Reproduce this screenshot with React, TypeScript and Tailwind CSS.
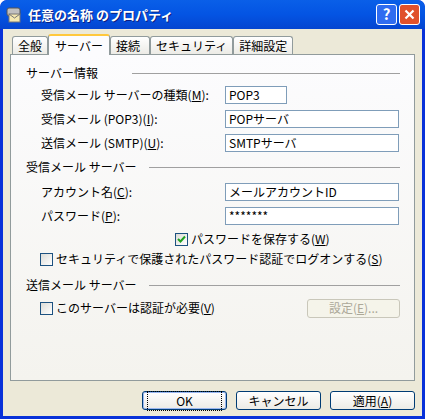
import React from "react";

const F = { fontFamily: '"MS UI Gothic","Noto Sans CJK JP",sans-serif' };

function Sec({ t, w }: { t: string; w: number }) {
  return (
    <div className="flex items-center h-[20px]">
      <span className="pl-[15px] whitespace-nowrap shrink-0" style={{ width: w }}>{t}</span>
      <div className="flex-1 h-px bg-[#a0a0a0] mr-[14px]" />
    </div>
  );
}

function Row({ label, value, w = 174 }: { label: React.ReactNode; value: string; w?: number }) {
  return (
    <div className="flex items-center h-[24px]">
      <span className="pl-[30px] w-[214px] whitespace-nowrap">{label}</span>
      <div className="h-[18px] border border-[#7f9db9] bg-white px-[3px] flex items-center" style={{ width: w }}>{value}</div>
    </div>
  );
}

function CB({ checked }: { checked?: boolean }) {
  return (
    <span className="w-[13px] h-[13px] border border-[#1c5180] bg-gradient-to-br from-[#dcdcd7] to-white flex items-center justify-center mr-[3px]">
      {checked && (
        <svg width="9" height="9" viewBox="0 0 9 9"><path d="M1 4 L3.5 6.5 L8 1.5" stroke="#21a121" strokeWidth="2" fill="none" /></svg>
      )}
    </span>
  );
}

function Btn({ children, def }: { children: React.ReactNode; def?: boolean }) {
  return (
    <div className={`w-[85px] h-[19px] rounded-[3px] border border-[#003c74] bg-gradient-to-b from-white to-[#ecebe6] flex items-center justify-center ${def ? "shadow-[inset_0_0_0_1px_#9ab7f0]" : ""}`}>
      {def ? <span className="outline outline-1 outline-dotted outline-black px-[28px]">{children}</span> : children}
    </div>
  );
}

const U = ({ c }: { c: string }) => <span className="underline">{c}</span>;

export default function App() {
  return (
    <div style={F} className="w-[425px] h-[419px] bg-[#0831d9] rounded-t-[7px] flex flex-col text-[12px] text-black overflow-hidden">
      <div className="h-[29px] bg-gradient-to-b from-[#0a5fe8] via-[#0454e3] to-[#0545d0] flex items-center px-[5px] rounded-t-[7px]">
        <svg width="18" height="16" viewBox="0 0 18 16" className="mr-[5px]">
          <rect x="2" y="1" width="13" height="8" rx="2" fill="#c0c0c0" stroke="#555" />
          <rect x="4" y="7" width="11" height="8" fill="#f4e8b0" stroke="#777" />
          <path d="M4 7 L9.5 11 L15 7" stroke="#777" fill="none" />
        </svg>
        <span className="text-white font-bold text-[13px] flex-1 [text-shadow:1px_1px_#0a1e80]">任意の名称 のプロパティ</span>
        <div className="w-[21px] h-[21px] rounded-[3px] border border-white bg-[#2f6cf0] text-white font-bold text-[15px] flex items-center justify-center mr-[2px]">?</div>
        <div className="w-[21px] h-[21px] rounded-[3px] border border-white bg-[#e0512c] flex items-center justify-center">
          <svg width="11" height="11" viewBox="0 0 11 11"><path d="M1.5 1.5 L9.5 9.5 M9.5 1.5 L1.5 9.5" stroke="white" strokeWidth="2.2" /></svg>
        </div>
      </div>
      <div className="flex-1 bg-[#ece9d8] mx-[3px] mb-[3px] flex flex-col px-[7px]">
        <div className="flex items-end h-[25px] mt-[0px]">
          <div className="h-[18px] px-[5px] border border-[#919b9c] border-b-0 rounded-t-[3px] bg-gradient-to-b from-white to-[#ecebe6] flex items-center ml-[2px]">全般</div>
          <div className="h-[21px] px-[6px] border border-[#919b9c] border-b-0 rounded-t-[3px] border-t-2 border-t-[#ffc83c] bg-[#fcfcfe] flex items-center relative top-px">サーバー</div>
          <div className="h-[18px] px-[5px] border border-[#919b9c] border-b-0 rounded-t-[3px] bg-gradient-to-b from-white to-[#ecebe6] flex items-center w-[40px]">接続</div>
          <div className="h-[18px] px-[5px] border border-[#919b9c] border-b-0 rounded-t-[3px] bg-gradient-to-b from-white to-[#ecebe6] flex items-center">セキュリティ</div>
          <div className="h-[18px] px-[5px] border border-[#919b9c] border-b-0 rounded-t-[3px] bg-gradient-to-b from-white to-[#ecebe6] flex items-center">詳細設定</div>
        </div>
        <div className="h-[327px] border border-[#919b9c] bg-gradient-to-b from-[#fcfcfe] to-[#f4f3ee] pt-[8px] flex flex-col">
          <Sec t="サーバー情報" w={121} />
          <Row label={<>受信メール サーバーの種類(<U c="M" />):</>} value="POP3" w={62} />
          <Row label={<>受信メール (POP3)(<U c="I" />):</>} value="POPサーバ" />
          <Row label={<>送信メール (SMTP)(<U c="U" />):</>} value="SMTPサーバ" />
          <div className="h-[2px]" />
          <Sec t="受信メール サーバー" w={138} />
          <div className="h-[3px]" />
          <Row label={<>アカウント名(<U c="C" />):</>} value="メールアカウントID" />
          <Row label={<>パスワード(<U c="P" />):</>} value="*******" />
          <div className="flex items-center h-[22px] pl-[164px]"><CB checked />パスワードを保存する(<U c="W" />)</div>
          <div className="flex items-center h-[18px] pl-[29px]"><CB />セキュリティで保護されたパスワード認証でログオンする(<U c="S" />)</div>
          <div className="h-[7px]" />
          <Sec t="送信メール サーバー" w={138} />
          <div className="flex items-center h-[26px] pl-[29px] pr-[14px]">
            <CB />このサーバーは認証が必要(<U c="V" />)
            <div className="ml-auto w-[93px] h-[19px] rounded-[3px] border border-[#c9c7ba] bg-[#f5f4ea] text-[#aca899] flex items-center justify-center">設定(<U c="E" />)...</div>
          </div>
        </div>
        <div className="flex justify-end gap-[9px] mt-[10px] pr-[0px]">
          <Btn def>OK</Btn>
          <Btn>キャンセル</Btn>
          <Btn>適用(<U c="A" />)</Btn>
        </div>
      </div>
    </div>
  );
}
